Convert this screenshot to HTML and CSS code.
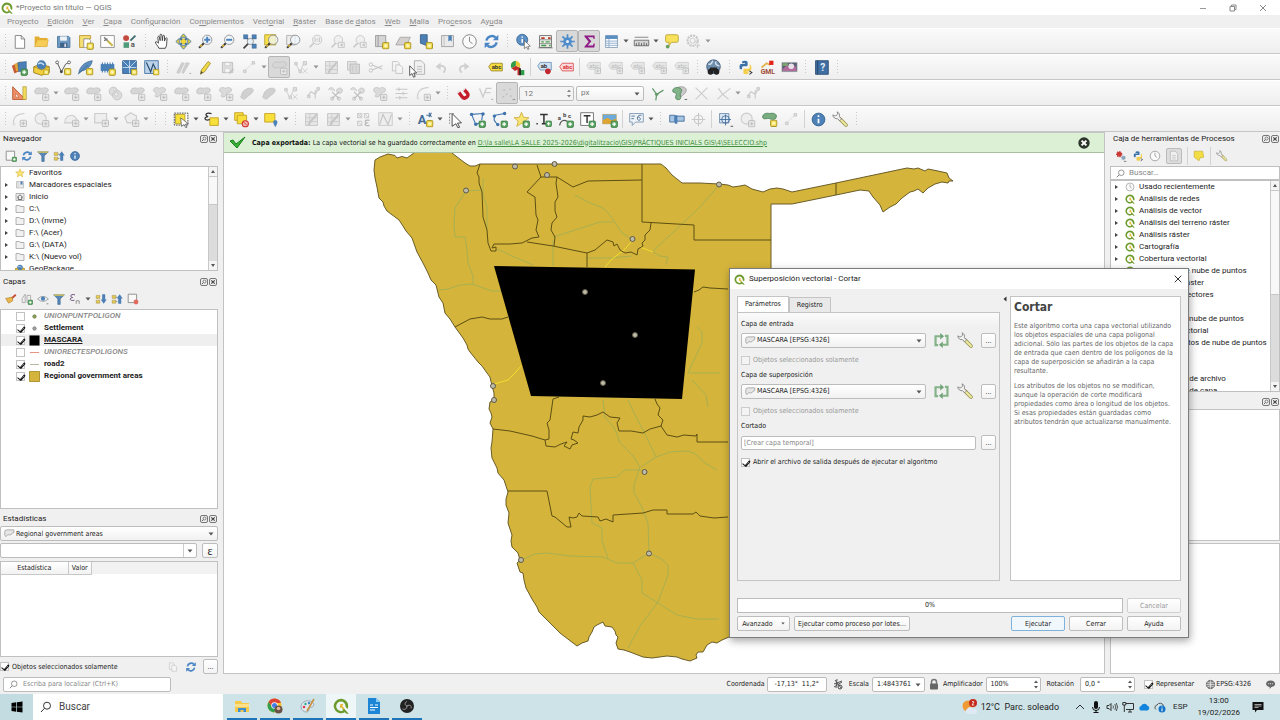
FILE: index.html
```html
<!DOCTYPE html>
<html lang="es">
<head>
<meta charset="utf-8">
<title>Proyecto sin título — QGIS</title>
<link rel="stylesheet" href="styles.css">
</head>
<body>
<svg class="defs" aria-hidden="true">
  <symbol id="by" viewBox="0 0 8 8"><rect x=".7" y=".7" width="6.6" height="6.6" rx="1" fill="#f2dc4e" stroke="#a58f22"/><path d="M4 2v4M2 4h4M2.6 2.6l2.8 2.8M5.4 2.6L2.600 5.400" stroke="#fffbd0" stroke-width=".8"/></symbol>
  <symbol id="bg" viewBox="0 0 8 8"><rect x=".7" y=".7" width="6.600" height="6.600" rx="1" fill="#5fa866" stroke="#3c7d45"/><path d="M4 2v4M2 4h4" stroke="#fff" stroke-width="1.300"/></symbol>
  <symbol id="bx" viewBox="0 0 8 8"><rect x=".7" y=".7" width="6.600" height="6.600" rx="1" fill="#e9e9e9" stroke="#b9b9b9"/><path d="M4 2.200v3.600M2.200 4h3.600" stroke="#bdbdbd"/></symbol>
  <symbol id="arr" viewBox="0 0 6 4"><path d="M.5.5h5L3 3.500z" fill="#555"/></symbol>
  <symbol id="q" viewBox="0 0 12 12"><path d="M6 .6a5.400 5.400 0 1 0 2.800 10l1.500 1.200h1.500L8.500 8.200 7 8l.5 1.300A3.500 3.500 0 1 1 9.400 6.600l1.500 1.600A5.400 5.400 0 0 0 6 .6z" fill="#6c9a2c"/><path d="M5.500 4.500h2.300L6.900 6l1.800 1.900-.9.900L6 7l-.9.800z" fill="#e2b733"/></symbol>
  <symbol id="mag" viewBox="0 0 12 12"><circle cx="7" cy="5" r="3.700" fill="none" stroke="#777"/><path d="M4.300 7.700L1 11" stroke="#777" stroke-width="1.200"/></symbol>

  <symbol id="new" viewBox="0 0 20 20"><path d="M5 3h7l4 4v11H5z" fill="#fff" stroke="#777"/><path d="M12 3v4h4" fill="none" stroke="#777"/></symbol>
  <symbol id="open" viewBox="0 0 20 20"><path d="M2 16V4h5l1 2h9v10z" fill="#e2ac30"/><path d="M2 16l3-8h13l-2 8z" fill="#f6cd55" stroke="#d7a42c" stroke-width=".6"/></symbol>
  <symbol id="save" viewBox="0 0 20 20"><path d="M4 4h12l1.500 1.500V17H3V4z" fill="#6f9bc4" stroke="#426d96"/><rect x="6" y="4" width="8" height="5" fill="#eef3f7"/><rect x="6" y="11.500" width="8.500" height="5.500" fill="#3e6288"/><rect x="11" y="12.500" width="2" height="4" fill="#dde"/></symbol>
  <symbol id="saveg" viewBox="0 0 20 20"><path d="M4 4h12v12H4z" fill="#dedede" stroke="#bbb"/><path d="M7 4h6v4H7zM7 11h6v5H7z" fill="#f4f4f4" stroke="#c4c4c4" stroke-width=".7"/><path d="M12 17l5-5" stroke="#c4c4c4" stroke-width="2"/></symbol>
  <symbol id="layout" viewBox="0 0 20 20"><path d="M3 3h13v4H8v10H3z" fill="#f5df72" stroke="#b9942f"/><path d="M8 7h6l2 2v8H8z" fill="#fff" stroke="#999"/><use href="#by" x="11" y="11" width="9" height="9"/></symbol>
  <symbol id="layoutm" viewBox="0 0 20 20"><path d="M2 3h16v14H2z" fill="#fff" stroke="#888"/><path d="M10 9l6 6" stroke="#c9b94e" stroke-width="2.500"/><path d="M6 5l4 4M6 9l4-2" stroke="#777" stroke-width="1.700"/></symbol>
  <symbol id="style" viewBox="0 0 20 20"><circle cx="6" cy="6" r="3.500" fill="#c4493f"/><path d="M11 9l6-6" stroke="#3d6c6e" stroke-width="2.200"/><rect x="3" y="11" width="6.500" height="6.500" fill="#4e9a79"/><text x="11.500" y="17" font-size="9" font-weight="700" fill="#555">a</text></symbol>
  <symbol id="hand" viewBox="0 0 20 20"><path d="M7 18c-1-3-5-6-4-7.500 1-1 3 1 3.500 1.500L5.600 5c0-1.500 1.800-1.500 2 0l.8 4L8.300 2.500c0-1.500 2-1.500 2.100 0L11 9l.6-5.500c.2-1.300 2-1 1.900.2L13.500 9.500l1.400-3.300c.5-1 1.900-.6 1.700.5C15.700 11 17 14 14.500 18z" fill="#fff" stroke="#333"/></symbol>
  <symbol id="pan" viewBox="0 0 20 20"><path d="M7 7h6v6H7z" fill="#f4db3a" stroke="#a8902a" stroke-width=".6"/><path d="M10 1l3.500 4h-7zM10 19l3.500-4h-7zM1 10l4-3.500v7zM19 10l-4-3.500v7z" fill="#f0d83d" stroke="#3f6f97" stroke-width="1"/><path d="M6 6l2 2M14 6l-2 2M6 14l2-2M14 14l-2-2" stroke="#3f6f97" stroke-width="2.400"/></symbol>
  <symbol id="lens" viewBox="0 0 20 20"><path d="M8 12l-5.500 5.500" stroke="#3a3a3a" stroke-width="2.400"/><path d="M6 14l-2 2" stroke="#e0b93e" stroke-width="1.800"/><circle cx="12" cy="8" r="5.500" fill="#eef5fb" fill-opacity=".75" stroke="#8b8b8b"/></symbol>
  <symbol id="zin" viewBox="0 0 20 20"><use href="#lens"/><path d="M12 4.500v7M8.500 8h7" stroke="#4a82bb" stroke-width="2.300"/></symbol>
  <symbol id="zout" viewBox="0 0 20 20"><use href="#lens"/><path d="M8.500 8h7" stroke="#4a82bb" stroke-width="2.300"/></symbol>
  <symbol id="zfull" viewBox="0 0 20 20"><path d="M3 2h5v5H3zM13 2h5v5h-5zM13 13h5v5h-5z" fill="#4d80b4" stroke="#35608c" stroke-width=".5"/><path d="M7 6l7 8M14 6l-4 4" stroke="#35608c" stroke-width="1.500"/><path d="M9 12l-6 6" stroke="#444" stroke-width="2"/><circle cx="11" cy="10" r="3.700" fill="#e8f1f8" stroke="#8b8b8b"/></symbol>
  <symbol id="zsel" viewBox="0 0 20 20"><path d="M2 2h13v12H2z" fill="#f5e04c" stroke="#b8a02c"/><use href="#lens"/></symbol>
  <symbol id="zlay" viewBox="0 0 20 20"><path d="M2 3h10v11H2z" fill="#eee" stroke="#aaa"/><use href="#lens"/></symbol>
  <symbol id="zg" viewBox="0 0 20 20"><path d="M8 12l-5 5" stroke="#ccc" stroke-width="2"/><circle cx="12" cy="8" r="5.500" fill="#f0f0f0" stroke="#c4c4c4"/><path d="M9.500 5.500v5M12 6.500V8M12 9v1M14.500 5.500v5" stroke="#bbb"/></symbol>
  <symbol id="zg2" viewBox="0 0 20 20"><path d="M8 12l-5 5" stroke="#ccc" stroke-width="2"/><circle cx="11" cy="8" r="5" fill="#f0f0f0" stroke="#c4c4c4"/><path d="M11 11h7v6h-7z" fill="#eee" stroke="#c4c4c4"/><path d="M16 12l-3 2 3 2z" fill="#bbb"/></symbol>
  <symbol id="mapn" viewBox="0 0 20 20"><path d="M3 3h12v13H3z" fill="#d5d5d5" stroke="#969696"/><path d="M6 3v13" stroke="#969696"/><use href="#by" x="10.500" y="10.500" width="9" height="9"/></symbol>
  <symbol id="map3" viewBox="0 0 20 20"><path d="M6 5h12l-4 9H1z" fill="#d5d0d0" stroke="#a5a0a0"/><use href="#by" x="10.500" y="10.500" width="9" height="9"/></symbol>
  <symbol id="bmn" viewBox="0 0 20 20"><path d="M4 2h8v13l-4-1.500L4 12z" fill="#4c7fb4" stroke="#365f88"/><use href="#by" x="10" y="10.500" width="9" height="9"/></symbol>
  <symbol id="bm" viewBox="0 0 20 20"><path d="M3 3h14v13H3z" fill="#eaeaea" stroke="#999"/><path d="M6 3v13" stroke="#bbb"/><path d="M11 3h4v7l-2-1.500L11 10z" fill="#4c7fb4"/></symbol>
  <symbol id="clock" viewBox="0 0 20 20"><circle cx="10" cy="10" r="8" fill="#fafafa" stroke="#777"/><path d="M10 4.500V10l3.500 2.500" fill="none" stroke="#777"/></symbol>
  <symbol id="ref" viewBox="0 0 20 20"><path d="M4 9a6.500 6.500 0 0 1 11-3.500M16 11a6.500 6.500 0 0 1-11 3.500" fill="none" stroke="#4a86c5" stroke-width="2.800"/><path d="M18 2v6.500h-6.500zM2 18v-6.500h6.500z" fill="#4a86c5"/></symbol>
  <symbol id="refg" viewBox="0 0 20 20"><path d="M6 15.500H3V5h6M14 4.500h3V15h-6" fill="none" stroke="#84b389" stroke-width="2.600"/><path d="M8.500 1.200v7.600L13 5zM11.500 11.200v7.600L7 15z" fill="#6fa377"/></symbol>
  <symbol id="ident" viewBox="0 0 20 20"><circle cx="8.500" cy="8" r="6.500" fill="#5c8fc4" stroke="#39689a"/><path d="M8.500 7v4.500M8.500 4v1.500" stroke="#fff" stroke-width="1.800"/><path d="M11 9l7 6.500-3 .2 1.500 3-1.500.6-1.300-3-2.700 2z" fill="#fff" stroke="#555" stroke-width=".8"/></symbol>
  <symbol id="abac" viewBox="0 0 20 20"><path d="M3 3h14v14H3z" fill="#f3f3ee" stroke="#666"/><path d="M3 8h14M3 12.500h14M1.500 17.500h17" stroke="#666" stroke-width=".8"/><path d="M5 6h4M13 6h3" stroke="#c0392b" stroke-width="2"/><path d="M5 10.500h3M10 10.500h5" stroke="#3f9a4f" stroke-width="1.600"/><path d="M5 14.700h6M14 14.700h2" stroke="#3f9a4f" stroke-width="1.600"/></symbol>
  <symbol id="gear" viewBox="0 0 20 20"><path d="M10 1.500v17M1.500 10h17M4 4l12 12M16 4L4 16" stroke="#4f8ccb" stroke-width="2"/><circle cx="10" cy="10" r="5" fill="#4f8ccb"/><circle cx="10" cy="10" r="1.800" fill="#e9f0f8"/></symbol>
  <symbol id="sigma" viewBox="0 0 20 20"><path d="M4 3h12v4h-1.200l-.7-1.900H8L12.200 9.800 8 14.800h6l1-2.500h1.300l-.6 4.700H4v-.9l5-5.800L4 4z" fill="#8e1b86"/></symbol>
  <symbol id="table" viewBox="0 0 20 20"><path d="M3 3h14v14H3z" fill="#fff" stroke="#7f9ab4"/><path d="M3 3h14v4H3z" fill="#5b8fc4"/><path d="M3 9.500h14M3 12h14M3 14.500h14M7 7v10" stroke="#86a9ca"/></symbol>
  <symbol id="ruler" viewBox="0 0 20 20"><path d="M2 5h16" stroke="#777"/><path d="M1.500 8.500h17V15h-17z" fill="#d6d6d6" stroke="#666"/><path d="M4 12v3M7 11v4M10 12v3M13 11v4M16 12v3" stroke="#555"/></symbol>
  <symbol id="tip" viewBox="0 0 20 20"><path d="M5 2h11q2 0 2 2v5q0 2-2 2h-6l-3 4v-4H5q-2 0-2-2V4q0-2 2-2z" fill="#f7e15a" stroke="#b9a136"/><circle cx="5.500" cy="16" r="2.200" fill="#67a15c"/></symbol>
  <symbol id="gearg" viewBox="0 0 20 20"><circle cx="9" cy="9" r="6" fill="none" stroke="#c8c8c8" stroke-width="2.500" stroke-dasharray="2.500 1"/><circle cx="9" cy="9" r="3" fill="none" stroke="#c8c8c8"/><path d="M11 9l6 6-3 0 1 3" fill="#eee" stroke="#c0c0c0"/></symbol>

  <symbol id="dsm" viewBox="0 0 20 20"><path d="M1 8l6-3 3 9-6 3z" fill="#c85a34"/><path d="M4 6l8-3v11H6z" fill="#e0a83b"/><path d="M8 4l10-1v10l-9 2z" fill="#4b7fb5" stroke="#305a85" stroke-width=".6"/><use href="#bg" x="11" y="11" width="9" height="9"/></symbol>
  <symbol id="gpkg" viewBox="0 0 20 20"><path d="M1 9l9-3 9 3v7l-9 3-9-3z" fill="#e7c132" stroke="#8f7620"/><circle cx="10" cy="7" r="5.500" fill="#4a7fb6"/><path d="M6 6q3-3 7 1" stroke="#cfe0ef" fill="none" stroke-width="1.500"/><path d="M1 9l9 4 9-4v7l-9 3-9-3z" fill="#f2cf3e" stroke="#9a8024" stroke-width=".7"/><use href="#by" x="12" y="12" width="7" height="7"/></symbol>
  <symbol id="vn" viewBox="0 0 20 20"><path d="M2.500 4l5 11 5-9 4-2" fill="none" stroke="#444"/><circle cx="2.500" cy="4" r="1.700" fill="#fff" stroke="#555"/><circle cx="7.500" cy="15" r="1.700" fill="#444"/><circle cx="16.500" cy="4" r="1.700" fill="#fff" stroke="#555"/><use href="#by" x="10.500" y="10.500" width="9" height="9"/></symbol>
  <symbol id="feather" viewBox="0 0 20 20"><path d="M2 17C3 9 9 3 18 2c-1 6-5 10-12 12z" fill="#5b8dbf" stroke="#355f8a" stroke-width=".7"/><path d="M1 18L13 7" stroke="#355f8a" stroke-width=".7"/><use href="#by" x="10.500" y="10.500" width="9" height="9"/></symbol>
  <symbol id="chip" viewBox="0 0 20 20"><path d="M2 6h16v8H2z" fill="#4a80b8"/><path d="M4 4v12M7 4v12M10 4v12M13 4v12M16 4v12" stroke="#4a80b8" stroke-width="1.300"/><use href="#by" x="11" y="11" width="9" height="9"/></symbol>
  <symbol id="grid" viewBox="0 0 20 20"><path d="M2 2h16v15H2z" fill="#4a80b8" stroke="#2d5a8b"/><path d="M2 10h16M10 2v15M2 2l8 8M18 2l-8 8" stroke="#dfeaf5" stroke-width=".9"/><use href="#by" x="11.500" y="11.500" width="8" height="8"/></symbol>
  <symbol id="virt" viewBox="0 0 20 20"><path d="M2 2h16v15H2z" fill="#bcd3ea" stroke="#3f6e9f"/><path d="M4 4l5 11 3-9 4 8" fill="none" stroke="#2d4f74" stroke-width="1.400"/><use href="#by" x="11.500" y="11.500" width="8" height="8"/></symbol>
  <symbol id="pens" viewBox="0 0 20 20"><path d="M2 16L8 4l3 1-6 12zM8 16l5-12 4 1-7 12z" fill="#cfcfcf" stroke="#bbb" stroke-width=".5"/><path d="M17 17h2" stroke="#999"/></symbol>
  <symbol id="pen" viewBox="0 0 20 20"><path d="M4 18l1-5 8-10 3 2-7 10z" fill="#f0d843" stroke="#8d7d2a" stroke-width=".8"/><path d="M4 18l1-4 2 2z" fill="#444"/></symbol>
  <symbol id="digi" viewBox="0 0 20 20"><path d="M3 15l12-11" stroke="#ccc" stroke-dasharray="2 1"/><path d="M13 3h3v3h-3zM3 13h3v3H3z" fill="#ddd" stroke="#c6c6c6"/></symbol>
  <symbol id="blob" viewBox="0 0 20 20"><path d="M2 8c0-5 5-5 8-4 3-1 8-1 8 2s-4 4-7 4-9 2-9-2z" fill="#d6d6d6" stroke="#c0c0c0"/><use href="#bx" x="10.500" y="10" width="9" height="9"/></symbol>
  <symbol id="blob2" viewBox="0 0 20 20"><path d="M3 6c0-3 4-4 7-2 3-2 8-1 7 3-1 2-4 1-5 3s-3 5-6 4 1-3 0-4-3-2-3-4z" fill="#dadada" stroke="#c3c3c3"/><use href="#bx" x="10.500" y="10" width="9" height="9"/></symbol>
  <symbol id="rings" viewBox="0 0 20 20"><circle cx="7.500" cy="7.500" r="5" fill="#dcdcdc" stroke="#c3c3c3"/><circle cx="12" cy="12" r="5.500" fill="#dcdcdc" stroke="#c3c3c3"/><circle cx="11" cy="11" r="2" fill="#f2f2f2" stroke="#c6c6c6"/></symbol>
  <symbol id="patch" viewBox="0 0 20 20"><path d="M3 12c1-6 7-9 12-8 4 2 0 6-3 8s-5 6-8 4-2-2-1-4z" fill="#d0d0d0" stroke="#c2c2c2"/></symbol>
  <symbol id="nodes" viewBox="0 0 20 20"><path d="M3 5l5 10 5-10" fill="none" stroke="#c8c8c8"/><path d="M2 4h3v3H2zM12 3h4v4h-4zM7 13h3v3H7z" fill="#ddd" stroke="#c6c6c6"/><path d="M11 11l6 6M17 11l-6 6" stroke="#ccc"/></symbol>
  <symbol id="split" viewBox="0 0 20 20"><path d="M2 6c0-4 6-4 7 1M11 7c1-5 8-4 7 0s-5 3-7 1" fill="#dcdcdc" stroke="#c4c4c4"/><path d="M6 8l8 8M14 8l-8 8" stroke="#bbb" stroke-width="1.300"/><circle cx="6" cy="16" r="1.800" fill="none" stroke="#bbb"/><circle cx="14" cy="16" r="1.800" fill="none" stroke="#bbb"/></symbol>
  <symbol id="lines" viewBox="0 0 20 20"><path d="M3 5h14M3 10h14M3 15h14M7 3v4M12 8v4M8 13v4" stroke="#c8c8c8" stroke-width="1.300"/></symbol>
  <symbol id="tableg" viewBox="0 0 20 20"><path d="M3 3h14v14H3z" fill="#e6e6e6" stroke="#c2c2c2"/><path d="M3 8h14M8 3v14M3 12.500h14" stroke="#cacaca"/><path d="M6 16L16 4" stroke="#c4c4c4" stroke-width="2"/></symbol>
  <symbol id="trash" viewBox="0 0 20 20"><path d="M3 3h10v10H3z" fill="#e3e3e3" stroke="#c0c0c0"/><path d="M6 6h11v11H6z" fill="#dadada" stroke="#b8b8b8"/><path d="M9 8v7M13 8v7" stroke="#c4c4c4"/></symbol>
  <symbol id="cut" viewBox="0 0 20 20"><path d="M6 7l12 5M6 13l12-5" stroke="#c6c6c6" stroke-width="1.300"/><circle cx="4.500" cy="6.500" r="2" fill="none" stroke="#c0c0c0"/><circle cx="4.500" cy="13.500" r="2" fill="none" stroke="#c0c0c0"/></symbol>
  <symbol id="copy" viewBox="0 0 20 20"><path d="M4 3h6l2 2v9H4z" fill="#f4f4f4" stroke="#c0c0c0"/><path d="M8 7h5l3 3v7H8z" fill="#f4f4f4" stroke="#c0c0c0"/></symbol>
  <symbol id="undo" viewBox="0 0 20 20"><path d="M5 9c8-3 12 2 7 7" fill="none" stroke="#d0d0d0" stroke-width="2.200"/><path d="M3 9l6-5v9z" fill="#d0d0d0"/></symbol>
  <symbol id="abc" viewBox="0 0 20 20"><path d="M2 9l3-4h13v9H5z" fill="#f5dc3f" stroke="#9a8729"/><text x="5.500" y="12" font-size="7" font-weight="700" fill="#333">abc</text></symbol>
  <symbol id="diag" viewBox="0 0 20 20"><path d="M8 8V2a6 6 0 0 1 5 8z" fill="#e8c832"/><path d="M8 8V2a6 6 0 0 0-5 9z" fill="#2f9c46"/><path d="M8 8l5 3-6 3-4-3z" fill="#c22f28"/><path d="M10 10h3v9h-3z" fill="#c22f28"/><path d="M13 13h5v6h-5z" fill="#2f9c46"/><path d="M12 11h2v8h-2z" fill="#222"/></symbol>
  <symbol id="abcp" viewBox="0 0 20 20"><path d="M2 8l3-4h13v9H5z" fill="#cfe0f1" stroke="#6d92b7"/><text x="5.500" y="11" font-size="7" font-weight="700" fill="#333">ab</text><circle cx="14" cy="14.500" r="3.300" fill="#c1272d"/></symbol>
  <symbol id="abcr" viewBox="0 0 20 20"><path d="M2 9l3-4h13v9H5z" fill="#fbdcdc" stroke="#dc4a4a"/><text x="5.500" y="12" font-size="7" font-weight="700" fill="#d33">abc</text></symbol>
  <symbol id="abcg" viewBox="0 0 20 20"><path d="M2 8l3-4h13v8H5z" fill="#e7e7e7" stroke="#cecece"/><text x="5" y="10.500" font-size="7" fill="#bbb">abc</text><use href="#bx" x="11" y="10" width="8" height="8"/></symbol>
  <symbol id="osm" viewBox="0 0 20 20"><circle cx="10" cy="9" r="8" fill="#6e8fae" stroke="#3e5a76"/><path d="M4 6q4 1 5-4M13 3q-2 4 4 5" stroke="#dfe9f2" fill="none" stroke-width="1.500"/><circle cx="6.500" cy="15" r="3.400" fill="#222"/><circle cx="13.500" cy="15" r="3.400" fill="#222"/><path d="M6 10h8l1 4H5z" fill="#222"/></symbol>
  <symbol id="py" viewBox="0 0 20 20"><path d="M3 11V8q0-2 2-2h4.500V5H6V3.500Q6 2 9 2t3.500 1.500V7q0 1.500-1.500 1.500H7.500Q6 8.500 6 10v2H4.500Q3 12 3 11z" fill="#3b73a8"/><path d="M15 6v4q0 1.500-1.500 1.500H9q-1.500 0-1.500 1.500v3Q7.500 18 10 18t3.500-1.500v-2h-3V14h4q2.500 0 2.500-3.500T15 6z" fill="#f3cf48"/><path d="M14.500 14l3 2-3 2" fill="none" stroke="#333" stroke-width="1.200"/></symbol>
  <symbol id="gml" viewBox="0 0 20 20"><path d="M3 10l6-5 4 2" stroke="#e3b34c" fill="none" stroke-width="2"/><path d="M12 2h5v5h-5z" fill="#e2231a"/><text x="2" y="18" font-size="8" font-weight="700" fill="#a04a35">GML</text></symbol>
  <symbol id="photo" viewBox="0 0 20 20"><path d="M1 4h18v11H1z" fill="#566174" stroke="#bbb" stroke-width=".6"/><path d="M2 12l5-5 4 4 3-5 4 4v4H2z" fill="#b26b9c"/><circle cx="12" cy="8.500" r="3.300" fill="#e9e2ea"/><path d="M2 5h6v3H2z" fill="#7faa6c"/></symbol>
  <symbol id="help" viewBox="0 0 20 20"><path d="M3 2h15v16H3z" fill="#3f6fa3" stroke="#2a4a70"/><path d="M5.500 2v16" stroke="#26415f"/><text x="8.500" y="14" font-size="12" font-weight="700" fill="#e6eef7">?</text></symbol>

  <symbol id="tri" viewBox="0 0 20 20"><path d="M2 2v15h15z" fill="#ef8f68" stroke="#b3512d"/><path d="M5.500 10v4h4z" fill="#fff" stroke="#b3512d" stroke-width=".6"/><path d="M14 2h4v15h-4z" fill="#f3dc5a" stroke="#a38c2c" stroke-width=".7"/></symbol>
  <symbol id="magnet" viewBox="0 0 20 20"><path d="M4 8l4.500 6c3 3.500 9-1 6-4.500L10.500 5" fill="none" stroke="#c41e2b" stroke-width="4"/><path d="M2.500 9.500l3-2.800M9 6.500l3-2.800" stroke="#e8e8e8" stroke-width="2.200"/></symbol>
  <symbol id="vsnap" viewBox="0 0 20 20"><path d="M3 4l4 10 4-10h6M10 9h6" fill="none" stroke="#ccc" stroke-width="1.600"/><path d="M17 17h2" stroke="#999"/></symbol>
  <symbol id="dots" viewBox="0 0 20 20"><path d="M5 5h2v2H5zM12 4h2v2h-2zM8 10h2v2H8zM13 12h2v2h-2zM4 13h2v2H4z" fill="#c2c2c2"/><path d="M16 17h3" stroke="#888"/></symbol>
  <symbol id="topo" viewBox="0 0 20 20"><path d="M4 4l5 7M17 6L9 11l-1 7" fill="none" stroke="#669c70" stroke-width="1.500"/><circle cx="9" cy="11" r="2" fill="#669c70"/></symbol>
  <symbol id="green" viewBox="0 0 20 20"><path d="M8 3c3-2 10-1 10 3s-4 5-6 8z" fill="#c9c9c9" stroke="#9d9d9d"/><path d="M2 7c0-4 6-5 9-3s1 4 0 6 2 6-1 7-6-1-4-5-4-2-4-5z" fill="#83b389" stroke="#4d8257"/><path d="M16 17h3" stroke="#555"/></symbol>
  <symbol id="cross" viewBox="0 0 20 20"><path d="M3 3l14 14M17 3L3 17" stroke="#ccc" stroke-width="1.300"/></symbol>
  <symbol id="crv" viewBox="0 0 20 20"><path d="M4 4l5 7 9-7M3 17l6-6 7 6" fill="none" stroke="#ccc" stroke-width="1.300"/></symbol>
  <symbol id="trace" viewBox="0 0 20 20"><path d="M3 13l4-5 5 3 4-7M12 16V6" fill="none" stroke="#ccc" stroke-width="1.500"/><path d="M14 3h3v3h-3zM3 12h3v3H3z" fill="#ddd" stroke="#c6c6c6"/></symbol>

  <symbol id="curve" viewBox="0 0 20 20"><path d="M3 16C2 7 8 3 16 3" fill="none" stroke="#ccc" stroke-width="1.300"/><path d="M2 14h3v3H2z" fill="#ddd"/><use href="#bx" x="10" y="10" width="9" height="9"/></symbol>
  <symbol id="circ" viewBox="0 0 20 20"><circle cx="9" cy="9" r="6.500" fill="#eee" stroke="#ccc" stroke-width="1.300"/><use href="#bx" x="10.500" y="10.500" width="9" height="9"/></symbol>
  <symbol id="ell" viewBox="0 0 20 20"><path d="M2 14c0-7 5-9 8-9s7 4 7 9z" fill="#eee" stroke="#ccc" stroke-width="1.300"/><use href="#bx" x="10.500" y="10" width="9" height="9"/></symbol>
  <symbol id="rct" viewBox="0 0 20 20"><path d="M2 3h14v11H2z" fill="#eee" stroke="#ccc" stroke-width="1.300"/><use href="#bx" x="10" y="10" width="9" height="9"/></symbol>
  <symbol id="poly" viewBox="0 0 20 20"><path d="M9 2l7 4-1 8H5L2 7z" fill="#eee" stroke="#ccc" stroke-width="1.300"/><use href="#bx" x="10.500" y="10" width="9" height="9"/></symbol>
  <symbol id="sel" viewBox="0 0 20 20"><path d="M1.500 2.500h16v14h-16z" fill="#fff" stroke="#333" stroke-dasharray="2 1"/><path d="M3 4h11v11H3z" fill="#f7e03c" stroke="#b39b25"/><path d="M9 8l9 7-3.500.5 2 3.500-1.500.6-2-3.600L10 18z" fill="#fff" stroke="#444" stroke-width=".8"/></symbol>
  <symbol id="sele" viewBox="0 0 20 20"><path d="M8 8h10v9H8z" fill="#f7df3c" stroke="#c29c22"/><path d="M10 3C4 1 1 5 6 6.500 0 7.500 2 12 8 10" fill="none" stroke="#333" stroke-width="1.500"/></symbol>
  <symbol id="selc" viewBox="0 0 20 20"><path d="M2 2h10v9H2z" fill="#f7df3c" stroke="#c29c22"/><path d="M5 5h11v10H5z" fill="#f7df3c" stroke="#c29c22"/><circle cx="14.500" cy="15" r="3.600" fill="#f3b6b1" stroke="#d0332b" stroke-width="1.300"/><path d="M12.500 13l4 4" stroke="#d0332b"/></symbol>
  <symbol id="sell" viewBox="0 0 20 20"><path d="M2 3h12v10H2z" fill="#f7df3c" stroke="#c29c22"/><path d="M14.500 19c-4-6-2.500-8 0-8s4 2 0 8z" fill="#4e83ba"/></symbol>
  <symbol id="eps" viewBox="0 0 20 20"><path d="M3 3h5v5H3zM3 12h5v5H3zM11 3h5v5h-5zM3 3l5 5M8 3L3 8M11 3l5 5M3 12l5 5" fill="none" stroke="#c4c4c4"/><path d="M17 11c-6-1-6 2-3 3-4 1-2 4 3 3" fill="none" stroke="#b5b5b5" stroke-width="1.400"/></symbol>
  <symbol id="mpoly" viewBox="0 0 20 20"><path d="M2 2h16v15H2z" fill="#eee" stroke="#c8c8c8"/><path d="M3 16L7 4l6 12 4-12" fill="none" stroke="#c2c2c2" stroke-width="1.300"/></symbol>
  <symbol id="anno" viewBox="0 0 20 20"><text x="1" y="15" font-size="15" font-weight="700" fill="#426b96">A</text><path d="M11 5h4M14 2l3 5M14 7l3-5" stroke="#426b96" stroke-width="1.300"/><use href="#by" x="10.500" y="10.500" width="9" height="9"/></symbol>
  <symbol id="asel" viewBox="0 0 20 20"><path d="M3 3v12M3 3h5" stroke="#777" stroke-dasharray="2 1.500"/><path d="M6 3l11 11-4.700.3 2.600 4.700-2 .8-2.500-4.800L6 18z" fill="#fff" stroke="#333"/></symbol>
  <symbol id="apoly" viewBox="0 0 20 20"><path d="M3 4l13-1-1 8M3 4l5 12 4-2" fill="none" stroke="#3d72ad" stroke-width="1.300"/><circle cx="3" cy="4" r="2" fill="#3d72ad"/><circle cx="16.500" cy="3.500" r="2" fill="#3d72ad"/><circle cx="8" cy="15.500" r="2" fill="#3d72ad"/><use href="#bg" x="11" y="11" width="9" height="9"/></symbol>
  <symbol id="aline" viewBox="0 0 20 20"><path d="M16 3L5 5q-4 5 3 11" fill="none" stroke="#3d72ad" stroke-width="1.300"/><circle cx="16" cy="3" r="2" fill="#3d72ad"/><circle cx="4" cy="6" r="2" fill="#3d72ad"/><circle cx="8" cy="16" r="2" fill="#3d72ad"/><use href="#bg" x="11" y="11" width="9" height="9"/></symbol>
  <symbol id="star" viewBox="0 0 20 20"><path d="M10 1.500l2.500 6 6.300.4-4.900 4 1.600 6.100-5.500-3.400L4.500 18l1.600-6.100-4.900-4 6.300-.4z" fill="#f8e470" stroke="#c9a52f" stroke-width=".9"/></symbol>
  <symbol id="astar" viewBox="0 0 20 20"><use href="#star"/><use href="#bg" x="11" y="11" width="9" height="9"/></symbol>
  <symbol id="atext" viewBox="0 0 20 20"><path d="M6 4h9M10.500 4v11M8 15h5" stroke="#333" stroke-width="1.800"/><path d="M1.500 14h2v2h-2z" fill="#555"/><use href="#bg" x="12" y="11" width="8" height="8"/></symbol>
  <symbol id="acurve" viewBox="0 0 20 20"><text x="1" y="10" font-size="7" font-weight="700" fill="#444">a</text><text x="7" y="7" font-size="7" font-weight="700" fill="#444">b</text><text x="13" y="8" font-size="7" font-weight="700" fill="#444">c</text><path d="M3 17c1-6 5-7 9-5" fill="none" stroke="#555" stroke-width="1.500"/><use href="#bg" x="11" y="11" width="9" height="9"/></symbol>
  <symbol id="atbox" viewBox="0 0 20 20"><path d="M2 2h15v15H2z" fill="#fff" stroke="#666"/><path d="M5.500 5.500h8M9.500 5.500V14" stroke="#333" stroke-width="1.700"/><use href="#bg" x="11" y="11" width="9" height="9"/></symbol>
  <symbol id="apic" viewBox="0 0 20 20"><path d="M2 4h16v11H2z" fill="#6cabdc" stroke="#b98b2b" stroke-width=".6"/><path d="M2 11l6-3 4 3 6-2v6H2z" fill="#e0a531"/><use href="#bg" x="11" y="11" width="9" height="9"/></symbol>
  <symbol id="aform" viewBox="0 0 20 20"><path d="M2 3h16v10H9l-4 4v-4H2z" fill="#eef3f8" stroke="#7591ad"/><path d="M4 6h4M4 9h3M16 5c-6-1-6 6-3 6s1-6-2-3" stroke="#47698c" fill="none"/></symbol>
  <symbol id="mlab" viewBox="0 0 20 20"><path d="M2 5h6v8H2zM10 6h9v6h-9z" fill="#a8c6e3" stroke="#3d6998"/><path d="M8 5h3v10H8z" fill="#4a7fb6"/></symbol>
  <symbol id="targ" viewBox="0 0 20 20"><circle cx="10" cy="10" r="5" fill="none" stroke="#c9c9c9" stroke-width="1.300"/><path d="M10 2v16M2 10h16" stroke="#c9c9c9" stroke-width="1.300"/></symbol>
  <symbol id="targb" viewBox="0 0 20 20"><path d="M3 3h11v11H3z" fill="#dbe6f2" stroke="#6a89a8"/><circle cx="10" cy="10" r="4.500" fill="none" stroke="#3f6b99"/><path d="M10 4v13M3.500 10h13" stroke="#3f6b99"/><path d="M16 18h3" stroke="#444"/></symbol>
  <symbol id="blobg" viewBox="0 0 20 20"><path d="M2 7c0-4 5-5 8-4 4-1 9 0 8 4s-5 3-8 2-8 2-8-2z" fill="#79ad7f" stroke="#4e8458"/><use href="#by" x="10.500" y="10" width="9" height="9"/></symbol>
  <symbol id="info" viewBox="0 0 20 20"><circle cx="10" cy="10" r="7.500" fill="#4d81b8" stroke="#325e8c"/><path d="M10 9v5.500M10 5v2" stroke="#fff" stroke-width="2"/></symbol>
  <symbol id="wrench" viewBox="0 0 20 20"><path d="M9.500 9.500l7 7" stroke="#9a9252" stroke-width="4.400" stroke-linecap="round"/><path d="M10.500 10.500l6 6" stroke="#eae79e" stroke-width="2.600" stroke-linecap="round"/><path d="M6 1c1 2 .5 3-.5 4S2.500 6 1 4.500C1 8 4 9.500 6.500 9l2.500 2.500 2.200-2.200L8.700 6.800C9.200 4 8.500 2 6 1z" fill="#f3f3f3" stroke="#707070" stroke-width=".9"/></symbol>
  <symbol id="filt" viewBox="0 0 20 20"><path d="M1 3h18l-7 7v9H8v-9z" fill="#5687b8" stroke="#3c688f"/><path d="M1 2.500h18l-1.500 2h-15z" fill="#e2c94d"/></symbol>
  <symbol id="coll" viewBox="0 0 20 20"><path d="M2 4h6v5H2zM2 12h6v5H2z" fill="#e7ca52" stroke="#9a8b4c" stroke-width=".8"/><path d="M8 7h3M8 14h3" stroke="#666"/><path d="M12 18V9H9.500L14.500 2l5 7H17v9z" fill="#4b7fb5"/></symbol>
  <symbol id="expd" viewBox="0 0 20 20"><path d="M2 4h6v5H2zM2 12h6v5H2z" fill="#e7ca52" stroke="#9a8b4c" stroke-width=".8"/><path d="M12 2v9H9.500l5 7 5-7H17V2z" fill="#4b7fb5"/></symbol>
  <symbol id="addl" viewBox="0 0 20 20"><path d="M2 2h14v15H2z" fill="#f8f8f8" stroke="#8a8a8a" stroke-width="1.500"/><use href="#bg" x="11" y="11" width="9" height="9"/></symbol>
  <symbol id="reml" viewBox="0 0 20 20"><path d="M2 2h14v14H2z" fill="#f8f8f8" stroke="#8a8a8a" stroke-width="1.500"/><circle cx="15" cy="15" r="4" fill="#e36a5f"/></symbol>
  <symbol id="brush" viewBox="0 0 20 20"><path d="M10 10l8-7" stroke="#c74b33" stroke-width="3"/><path d="M1 9l5 8 7-4-1-6z" fill="#e9b74d" stroke="#ac7a28"/></symbol>
  <symbol id="eye" viewBox="0 0 20 20"><path d="M1 10q9-9 18 0-9 8-18 0z" fill="#eef3f7" stroke="#777"/><circle cx="10" cy="9.500" r="3.500" fill="#4c81b7"/><path d="M16 18h3" stroke="#444"/></symbol>
  <symbol id="grp" viewBox="0 0 20 20"><path d="M2 16V9l5-7v14zM10 4h6v12h-6z" fill="#eee" stroke="#888"/><use href="#bg" x="11" y="11" width="9" height="9"/></symbol>
  <symbol id="epsu" viewBox="0 0 20 20"><path d="M10 3C3 1 0 6 6 7.500-1 9 2 14 9 12" fill="none" stroke="#654a77" stroke-width="1.600"/><path d="M12 18v-5h5v5" fill="none" stroke="#888" stroke-width="1.500"/></symbol>
  <symbol id="fold" viewBox="0 0 20 20"><path d="M2 3h7l1 2h8v12H2z" fill="#f1f1f1" stroke="#858585" stroke-width="1.200"/></symbol>
  <symbol id="home" viewBox="0 0 20 20"><path d="M2 3h16v14H2z" fill="#f1f1f1" stroke="#858585" stroke-width="1.200"/><path d="M10 5.500l5 4.500h-1.500v5h-7v-5H5z" fill="none" stroke="#444" stroke-width="1.500"/></symbol>
  <symbol id="pol" viewBox="0 0 14 10"><path d="M1 7.500V3q0-2 3-2h8.500v3.500q-3 .5-4 3H7Q5 6 3.500 8.500T1 7.500z" fill="#e6e6e6" stroke="#8a8a8a" stroke-width=".8"/></symbol>
  <symbol id="gears" viewBox="0 0 20 20"><circle cx="7" cy="7" r="4" fill="#c93b36" stroke="#c93b36" stroke-width="2.600" stroke-dasharray="2 1.400"/><circle cx="14" cy="13" r="3" fill="#8aa3bb" stroke="#8aa3bb" stroke-width="2" stroke-dasharray="1.600 1.200"/><path d="M15 19h4" stroke="#333"/></symbol>
  <symbol id="doc" viewBox="0 0 20 20"><path d="M4 2h8l4 4v12H4z" fill="#f0f0f0" stroke="#aaa"/><path d="M7 9h6M7 12h6M7 15h6" stroke="#b5b5b5"/></symbol>
  <symbol id="note" viewBox="0 0 20 20"><path d="M2 2h14l2 10-6 1-2 5-8-6z" fill="#f2dd45" stroke="#c4a92c"/></symbol>
  <symbol id="float" viewBox="0 0 8 8"><rect x=".5" y=".5" width="7" height="7" rx="1.500" fill="#eee" stroke="#777"/><circle cx="4.500" cy="3.500" r="1.500" fill="none" stroke="#666" stroke-width=".8"/><path d="M2 6l1.500-1.500" stroke="#666"/></symbol>
  <symbol id="close" viewBox="0 0 8 8"><rect x=".5" y=".5" width="7" height="7" rx="1.500" fill="#eee" stroke="#777"/><path d="M2.300 2.300l3.400 3.400M5.700 2.300L2.300 5.700" stroke="#444" stroke-width="1.100"/></symbol>
</svg>

<header class="titlebar">
  <svg class="app-logo"><use href="#q"/></svg>
  <span>*Proyecto sin título — QGIS</span>
  <div class="win-btns">
    <button aria-label="Minimizar"><svg viewBox="0 0 8 8"><path d="M1 4.500h6" stroke="#999"/></svg></button>
    <button aria-label="Restaurar"><svg viewBox="0 0 8 8"><path d="M1 2.500h4.500V7H1zM2.500 2.500V1H7v4.500H5.500" fill="none" stroke="#888"/></svg></button>
    <button aria-label="Cerrar"><svg viewBox="0 0 8 8"><path d="M1 1l6 6M7 1L1 7" stroke="#888"/></svg></button>
  </div>
</header>

<nav class="menubar">
  <a href="#">Pro<u>y</u>ecto</a><a href="#"><u>E</u>dición</a><a href="#"><u>V</u>er</a><a href="#"><u>C</u>apa</a><a href="#">Confi<u>g</u>uración</a><a href="#">Co<u>m</u>plementos</a><a href="#">Vect<u>o</u>rial</a><a href="#"><u>R</u>áster</a><a href="#">Base de <u>d</u>atos</a><a href="#"><u>W</u>eb</a><a href="#"><u>M</u>alla</a><a href="#">Pro<u>c</u>esos</a><a href="#">Ay<u>u</u>da</a>
</nav>

<div class="toolbar"><i class="grip first"></i>
  <button class="tb"><svg><use href="#new"/></svg></button><button class="tb"><svg><use href="#open"/></svg></button><button class="tb"><svg><use href="#save"/></svg></button><button class="tb"><svg><use href="#layout"/></svg></button><button class="tb"><svg><use href="#layoutm"/></svg></button><button class="tb"><svg><use href="#style"/></svg></button><i class="grip"></i>
  <button class="tb"><svg><use href="#hand"/></svg></button><button class="tb"><svg><use href="#pan"/></svg></button><button class="tb"><svg><use href="#zin"/></svg></button><button class="tb"><svg><use href="#zout"/></svg></button><button class="tb"><svg><use href="#zfull"/></svg></button><button class="tb"><svg><use href="#zsel"/></svg></button><button class="tb"><svg><use href="#zlay"/></svg></button><button class="tb"><svg><use href="#zg"/></svg></button><button class="tb"><svg><use href="#zg2"/></svg></button><button class="tb"><svg><use href="#zg2"/></svg></button><button class="tb"><svg><use href="#mapn"/></svg></button><button class="tb"><svg><use href="#map3"/></svg></button><button class="tb"><svg><use href="#bmn"/></svg></button><button class="tb"><svg><use href="#bm"/></svg></button><button class="tb"><svg><use href="#clock"/></svg></button><button class="tb"><svg><use href="#ref"/></svg></button><i class="grip"></i>
  <button class="tb"><svg><use href="#ident"/></svg></button><button class="tb"><svg><use href="#abac"/></svg></button><button class="tb on"><svg><use href="#gear"/></svg></button><button class="tb on"><svg><use href="#sigma"/></svg></button><button class="tb"><svg><use href="#table"/></svg></button><button class="dd"><svg><use href="#arr"/></svg></button><button class="tb"><svg><use href="#ruler"/></svg></button><button class="dd"><svg><use href="#arr"/></svg></button><button class="tb"><svg><use href="#tip"/></svg></button><button class="tb"><svg><use href="#gearg"/></svg></button><button class="dd off"><svg><use href="#arr"/></svg></button>
</div>

<div class="toolbar"><i class="grip first"></i>
  <button class="tb"><svg><use href="#dsm"/></svg></button><button class="tb"><svg><use href="#gpkg"/></svg></button><button class="tb"><svg><use href="#vn"/></svg></button><button class="tb"><svg><use href="#feather"/></svg></button><button class="tb"><svg><use href="#chip"/></svg></button><button class="tb"><svg><use href="#grid"/></svg></button><button class="tb"><svg><use href="#virt"/></svg></button><i class="grip"></i>
  <button class="tb"><svg><use href="#pens"/></svg></button><button class="tb"><svg><use href="#pen"/></svg></button><button class="tb"><svg><use href="#saveg"/></svg></button><button class="tb"><svg><use href="#digi"/></svg></button><button class="dd off"><svg><use href="#arr"/></svg></button><button class="tb on"><svg><use href="#blob"/></svg></button><button class="tb"><svg><use href="#nodes"/></svg></button><button class="dd off"><svg><use href="#arr"/></svg></button><button class="tb"><svg><use href="#tableg"/></svg></button><button class="tb"><svg><use href="#trash"/></svg></button><button class="tb"><svg><use href="#cut"/></svg></button><button class="tb"><svg><use href="#copy"/></svg></button><button class="tb"><svg><use href="#doc"/></svg></button><button class="tb"><svg><use href="#undo"/></svg></button><button class="tb flip"><svg><use href="#undo"/></svg></button><i class="gap"></i>
  <button class="tb"><svg><use href="#abc"/></svg></button><button class="tb"><svg><use href="#diag"/></svg></button><i class="sep"></i><button class="tb"><svg><use href="#abcp"/></svg></button><button class="tb"><svg><use href="#abcr"/></svg></button><i class="sep"></i><button class="tb"><svg><use href="#abcg"/></svg></button><button class="tb"><svg><use href="#abcg"/></svg></button><button class="tb"><svg><use href="#abcg"/></svg></button><button class="tb"><svg><use href="#abcg"/></svg></button><button class="tb"><svg><use href="#abcg"/></svg></button><i class="grip"></i>
  <button class="tb"><svg><use href="#osm"/></svg></button><i class="grip"></i><button class="tb"><svg><use href="#py"/></svg></button><button class="tb"><svg><use href="#gml"/></svg></button><button class="tb"><svg><use href="#photo"/></svg></button><i class="grip"></i><button class="tb"><svg><use href="#help"/></svg></button><i class="grip"></i>
</div>

<div class="toolbar"><i class="grip first"></i>
  <button class="tb"><svg><use href="#tri"/></svg></button><button class="tb"><svg><use href="#blob"/></svg></button><button class="dd off"><svg><use href="#arr"/></svg></button><button class="tb"><svg><use href="#blob"/></svg></button><button class="tb"><svg><use href="#blob"/></svg></button><button class="tb"><svg><use href="#rings"/></svg></button><button class="tb"><svg><use href="#blob"/></svg></button><button class="tb"><svg><use href="#blob2"/></svg></button><button class="tb"><svg><use href="#blob"/></svg></button><button class="tb"><svg><use href="#blob"/></svg></button><button class="tb"><svg><use href="#blob2"/></svg></button><button class="tb"><svg><use href="#patch"/></svg></button><button class="tb"><svg><use href="#patch"/></svg></button><button class="tb"><svg><use href="#nodes"/></svg></button><button class="tb"><svg><use href="#trace"/></svg></button><button class="tb"><svg><use href="#split"/></svg></button><button class="tb"><svg><use href="#split"/></svg></button><button class="tb"><svg><use href="#blob2"/></svg></button><button class="tb"><svg><use href="#lines"/></svg></button><button class="tb"><svg><use href="#curve"/></svg></button><button class="dd off"><svg><use href="#arr"/></svg></button><i class="grip"></i>
  <button class="tb"><svg><use href="#magnet"/></svg></button><button class="tb"><svg><use href="#vsnap"/></svg></button><button class="tb on"><svg><use href="#dots"/></svg></button>
  <div class="spin snap-spin"><input aria-label="Tolerancia" value="12"><svg viewBox="0 0 6 10"><path d="M3 1l2 2.500H1zM3 9l2-2.500H1z" fill="#888"/></svg></div>
  <div class="combo snap-unit"><select aria-label="Unidades"><option>px</option></select><svg><use href="#arr"/></svg></div>
  <button class="tb"><svg><use href="#topo"/></svg></button><button class="tb"><svg><use href="#green"/></svg></button><button class="tb"><svg><use href="#cross"/></svg></button><button class="tb"><svg><use href="#crv"/></svg></button><button class="dd off"><svg><use href="#arr"/></svg></button><button class="tb"><svg><use href="#trace"/></svg></button>
</div>

<div class="toolbar"><i class="grip first"></i>
  <button class="tb"><svg><use href="#curve"/></svg></button><button class="tb"><svg><use href="#circ"/></svg></button><button class="dd off"><svg><use href="#arr"/></svg></button><button class="tb"><svg><use href="#ell"/></svg></button><button class="dd off"><svg><use href="#arr"/></svg></button><button class="tb"><svg><use href="#rct"/></svg></button><button class="dd off"><svg><use href="#arr"/></svg></button><button class="tb"><svg><use href="#poly"/></svg></button><button class="dd off"><svg><use href="#arr"/></svg></button><i class="grip"></i><i class="grip"></i>
  <button class="tb"><svg><use href="#sel"/></svg></button><button class="dd"><svg><use href="#arr"/></svg></button><button class="tb"><svg><use href="#sele"/></svg></button><button class="dd"><svg><use href="#arr"/></svg></button><button class="tb"><svg><use href="#selc"/></svg></button><button class="dd"><svg><use href="#arr"/></svg></button><button class="tb"><svg><use href="#sell"/></svg></button><button class="dd"><svg><use href="#arr"/></svg></button><i class="grip"></i>
  <button class="tb"><svg><use href="#tableg"/></svg></button><button class="tb"><svg><use href="#tableg"/></svg></button><button class="dd off"><svg><use href="#arr"/></svg></button><button class="tb"><svg><use href="#eps"/></svg></button><button class="tb"><svg><use href="#mpoly"/></svg></button><button class="dd off"><svg><use href="#arr"/></svg></button><i class="grip"></i>
  <button class="tb"><svg><use href="#anno"/></svg></button><button class="dd"><svg><use href="#arr"/></svg></button><button class="tb"><svg><use href="#asel"/></svg></button><button class="tb"><svg><use href="#apoly"/></svg></button><button class="tb"><svg><use href="#aline"/></svg></button><button class="tb"><svg><use href="#astar"/></svg></button><button class="tb"><svg><use href="#atext"/></svg></button><button class="tb"><svg><use href="#acurve"/></svg></button><button class="tb"><svg><use href="#atbox"/></svg></button><button class="tb"><svg><use href="#apic"/></svg></button><i class="sep"></i><button class="tb"><svg><use href="#aform"/></svg></button><button class="dd"><svg><use href="#arr"/></svg></button><i class="grip"></i>
  <button class="tb"><svg><use href="#mlab"/></svg></button><button class="tb"><svg><use href="#targ"/></svg></button><i class="sep"></i><button class="tb"><svg><use href="#targb"/></svg></button><button class="tb"><svg><use href="#circ"/></svg></button><button class="tb"><svg><use href="#blobg"/></svg></button><button class="tb"><svg><use href="#digi"/></svg></button><i class="sep"></i><button class="tb"><svg><use href="#info"/></svg></button><button class="tb"><svg><use href="#wrench"/></svg></button><i class="grip"></i>
</div>

<main class="workspace">
  <aside class="dock left">
    <section class="panel browser">
      <div class="dock-head"><h2>Navegador</h2><svg><use href="#float"/></svg><svg><use href="#close"/></svg></div>
      <div class="dock-tools"><svg><use href="#addl"/></svg><svg><use href="#ref"/></svg><svg><use href="#filt"/></svg><svg><use href="#coll"/></svg><svg><use href="#info"/></svg></div>
      <div class="tree-box">
        <ul class="tree">
          <li class="leaf"><svg><use href="#star"/></svg>Favoritos</li>
          <li><svg><use href="#bm"/></svg>Marcadores espaciales</li>
          <li><svg><use href="#home"/></svg>Inicio</li>
          <li><svg><use href="#fold"/></svg>C:\</li>
          <li><svg><use href="#fold"/></svg>D:\ (nvme)</li>
          <li><svg><use href="#fold"/></svg>F:\ (Acer)</li>
          <li><svg><use href="#fold"/></svg>G:\ (DATA)</li>
          <li><svg><use href="#fold"/></svg>K:\ (Nuevo vol)</li>
          <li class="leaf"><svg><use href="#gpkg"/></svg>GeoPackage</li>
        </ul>
        <div class="scroll"><b class="up"></b><span class="thumb"></span><b class="down"></b></div>
      </div>
    </section>
    <section class="panel layers">
      <div class="dock-head"><h2>Capas</h2><svg><use href="#float"/></svg><svg><use href="#close"/></svg></div>
      <div class="dock-tools"><svg><use href="#brush"/></svg><svg><use href="#grp"/></svg><svg><use href="#eye"/></svg><svg><use href="#filt"/></svg><svg><use href="#epsu"/></svg><svg class="tiny"><use href="#arr"/></svg><svg><use href="#expd"/></svg><svg><use href="#coll"/></svg><svg><use href="#reml"/></svg></div>
      <ul class="layer-list">
        <li class="off"><label><input type="checkbox"><svg viewBox="0 0 12 12"><circle cx="6" cy="6" r="1.800" fill="#8fa35a" stroke="#6f8048"/></svg>UNIONPUNTPOLIGON</label></li>
        <li><label><input type="checkbox" checked><svg viewBox="0 0 12 12"><circle cx="6" cy="6" r="1.800" fill="#aaa" stroke="#777"/></svg>Settlement</label></li>
        <li class="cur"><label><input type="checkbox" checked><svg viewBox="0 0 12 12"><path d="M.5.500h11v11H.5z"/></svg><u>MASCARA</u></label></li>
        <li class="off"><label><input type="checkbox"><svg viewBox="0 0 12 12"><path d="M1 6h10" stroke="#e58a78"/></svg>UNIORECTESPOLIGONS</label></li>
        <li><label><input type="checkbox" checked><svg viewBox="0 0 12 12"><path d="M1 6h10" stroke="#b3b49a"/></svg>road2</label></li>
        <li><label><input type="checkbox" checked><svg viewBox="0 0 12 12"><path d="M.5.500h11v11H.5z" fill="#d4b43a" stroke="#a88e2c"/></svg>Regional government areas</label></li>
      </ul>
    </section>
    <section class="panel stats dlg-font">
      <div class="dock-head"><h2>Estadísticas</h2><svg><use href="#float"/></svg><svg><use href="#close"/></svg></div>
      <div class="combo with-icon"><svg class="pre"><use href="#pol"/></svg><select aria-label="Capa"><option>Regional government areas</option></select><svg><use href="#arr"/></svg></div>
      <div class="expr"><div class="combo plain"><select aria-label="Campo"><option></option></select><svg><use href="#arr"/></svg></div><button class="btn eps-btn" aria-label="Expresión">ε</button></div>
      <div class="stat-table"><table><thead><tr><th class="c1">Estadística</th><th class="c2">Valor</th></tr></thead></table></div>
      <div class="stat-foot"><label><input type="checkbox" checked>Objetos seleccionados solamente</label><svg><use href="#copy"/></svg><svg><use href="#ref"/></svg><button class="btn more" aria-label="Más">...</button></div>
    </section>
  </aside>

  <section class="canvas">
    <div class="message dlg-font">
      <svg class="tick" viewBox="0 0 18 14"><path d="M1 5l3-1 3 4 9-7L8 12z" fill="#35b233" stroke="#1e7d22"/></svg>
      <p><b>Capa exportada:</b> La capa vectorial se ha guardado correctamente en <a href="#">D:\la salle\LA SALLE 2025-2026\digitalitzacio\GIS\PRÀCTIQUES INICIALS GIS\4\SELECCIO.shp</a></p>
      <button class="msg-close" aria-label="Cerrar mensaje"><svg viewBox="0 0 12 12"><circle cx="6" cy="6" r="5.700" fill="#2b3529"/><path d="M3.600 3.600l4.800 4.800M8.400 3.600L3.600 8.400" stroke="#fff" stroke-width="2"/></svg></button>
    </div>
    <svg class="map" viewBox="224 153 880 520" preserveAspectRatio="xMinYMin slice" role="img" aria-label="Mapa">
      <path d="M418 150L407 158 402 156.500 397 158 395 155.500 388 154 380 157 375 160 374 170 375 178 377 187 379 198 383 202 384 206 387 211 395 217 399 220 403 226 406 231 412 238 417 252 423 263 428 273 431 280 436 285 439 297 443 303 445 313 450 319 455 327 463 338 467 345 468 349 470 352 478 362 482 366 487 373 490 377 492 386 494 393 494 400 490 402 489 409 491 413 492 417 490 423 493 429 492 442 491 448 492 458 497 468 498 473 504 480 506 486 508 492 506 499 506 505 509 513 508 523 512 535 511 541 512 547 518 553 520 560 517 563 520 572 523 573 524 580 526 588 532 599 537 607 539 612 545 618 560 633 577 646 582 643 588 641 589 637 592 632 594 627 597 625 603 622 605 626 612 627 615 631 616 635 618 637 616 643 618 649 624 650 630 652 643 657 652 658 667 656 677 657 682 659 690 661 697 658 696 655 698 652 703 652 707 645 712 642 717 643 722 640 729 637H771V204H792L836 195 860 190 869 191 873 197 880 205 883 212 890 207 896 204 902 198 910 192 914 191 918 189 923 193 928 188 935 184 942 182 948 183 949 181 953 181 949 178 947 173 938 171 928 169 925 171 918 168 914 169 907 168 836 183 792 192 783 189 777 188 770 189 763 192 752 189 745 185 740 186 733 187 728 185 719 184 700 183 682 183 677 179 672 175 666 168 661 164H480L475 166 470 166 465 163 452 153 449 150z" class="land"/>
      <g class="road">
        <path d="M483 178V195L487 207V230M466 191L455 208 454 225 455 237H465L467 250 468 263 473 276V285M439 290L448 289 460 285 472 284 492 291H501M482 190L466 191M497 249L512 256 533 265M575 195L588 202 603 208 610 215 622 233 632 239M553 237L575 230 600 222H613M553 240V266M587 258H610L632 256M719 185L700 207 652 252M653 252L660 256 668 257 666 264M697 327L702 332V343L688 373H720M692 380L706 395 708 407"/>
        <path d="M603 400L605 417 615 429 620 443 633 456 640 467 634 485V493L641 505 648 523 649 552M628 400L634 413 643 430 656 457M641 467L656 457 670 452 687 451 694 453 705 463 717 470M641 470H625L617 477 593 479 590 487 592 523 602 528V541L608 558M521 560L535 554 547 553 570 556 603 557 617 563 633 563 649 553M633 563L642 580V593L677 615 697 619H719M649 553L662 559 668 565V575L658 602 640 626 628 648"/>
      </g>
      <path class="road yellow" d="M494 384L508 380 515 373 521 366M632 241L624 250 612 259 605 267M640 247L653 252"/>
      <g class="border">
        <path d="M480 164L477 173 479 177 479 183 482 192 483 217 487 230 488 243 491 251H496V247L492 248 494 244 510 244 522 243 532 238 539 237 536 230 538 220 536 215 535 197 527 192 541 177 537 165M541 177H557L573 187 588 181 642 180M557 177L556 183 558 197 555 202 555 211 557 217 552 223 551 230 555 237 554 246M527 242L553 246 587 253V267M587 253L595 250 607 240 613 242 614 246 617 244 620 250 625 253 631 252 637 255 638 249 643 246 642 243 645 240V235L650 230 651 223M642 164V222L694 225V240H771M836 183V195M694 292L699 290 703 287 710 288 728 289M455 327L470 319 482 317 490 319 502 319 508 317"/>
        <path d="M493 429L510 431 532 436 545 440 546 446 555 447 561 444 567 442 564 446 570 449 572 445 578 443 574 440 571 439 573 432 578 433 579 427 583 420 583 416 590 417 597 415 603 412 610 417 620 418 617 423 619 431 631 431 643 433 650 429 661 426 667 435 677 437 684 435 696 436 697 434V442H728M559 397L553 399 551 413 550 420 547 423 549 430V439L545 440M655 399L657 404 660 408 658 415 663 420 661 426M508 491H547L552 516 555 517 567 527 571 527 569 517 573 518 577 517 579 513 582 516 598 517 600 521 606 519 613 522V515L643 513 653 510H667V514L693 514 696 512 700 516 714 518 728 517"/>
      </g>
      <path d="M494 266L695 269.500 682 399 531 396z" fill="#000"/>
      <g class="town"><circle cx="515" cy="166.500" r="2.500"/><circle cx="554.500" cy="164" r="2.500"/><circle cx="547" cy="175" r="2.500"/><circle cx="466" cy="190.500" r="2.500"/><circle cx="719" cy="184.500" r="2.500"/><circle cx="632.500" cy="239" r="2.500"/><circle cx="493" cy="386" r="2.500"/><circle cx="494" cy="400" r="2.500"/><circle cx="521" cy="560" r="2.500"/><circle cx="644.500" cy="472" r="2.500"/><circle cx="649" cy="553.500" r="2.500"/><circle cx="585" cy="292" r="2.500"/><circle cx="635" cy="335" r="2.500"/><circle cx="603" cy="383" r="2.500"/></g>
    </svg>
  </section>

  <aside class="dock right">
    <section class="panel toolbox">
      <div class="dock-head"><h2>Caja de herramientas de Procesos</h2><svg><use href="#float"/></svg><svg><use href="#close"/></svg></div>
      <div class="dock-tools"><svg><use href="#gears"/></svg><svg><use href="#py"/></svg><svg><use href="#clock"/></svg><span class="pressed"><svg><use href="#doc"/></svg></span><i class="sep"></i><svg><use href="#note"/></svg><i class="sep"></i><svg><use href="#wrench"/></svg></div>
      <div class="search"><svg><use href="#mag"/></svg><input type="search" placeholder="Buscar…" aria-label="Buscar"></div>
      <div class="tree-box">
        <ul class="tree">
          <li><svg><use href="#clock"/></svg>Usado recientemente</li>
          <li><svg><use href="#q"/></svg>Análisis de redes</li>
          <li><svg><use href="#q"/></svg>Análisis de vector</li>
          <li><svg><use href="#q"/></svg>Análisis del terreno ráster</li>
          <li><svg><use href="#q"/></svg>Análisis ráster</li>
          <li><svg><use href="#q"/></svg>Cartografía</li>
          <li><svg><use href="#q"/></svg>Cobertura vectorial</li>
          <li><svg><use href="#q"/></svg>Conversión de nube de puntos</li>
          <li><svg><use href="#q"/></svg>Creación de ráster</li>
          <li><svg><use href="#q"/></svg>Creación de vectores</li>
          <li><svg><use href="#q"/></svg>Estadísticas</li>
          <li><svg><use href="#q"/></svg>Extracción de nube de puntos</li>
          <li><svg><use href="#q"/></svg>Geometría vectorial</li>
          <li><svg><use href="#q"/></svg>Gestión de datos de nube de puntos</li>
          <li><svg><use href="#q"/></svg>GPS</li>
          <li><svg><use href="#q"/></svg>Gráficos</li>
          <li><svg><use href="#q"/></svg>Herramientas de archivo</li>
          <li><svg><use href="#q"/></svg>Herramientas de capa</li>
        </ul>
        <div class="scroll"><b class="up"></b><span class="thumb tall"></span><b class="down"></b></div>
      </div>
    </section>
    <section class="panel side">
      <div class="dock-head"><h2></h2><svg><use href="#float"/></svg><svg><use href="#close"/></svg></div>
      <div class="blank top"></div>
      <div class="blank"></div>
    </section>
  </aside>

  <svg class="pointer" viewBox="0 0 9 13"><path d="M.7.800v9.700l2.300-2 1.500 3.700 1.700-.7-1.500-3.500h3z" fill="#fff" stroke="#333" stroke-width=".8"/></svg>
</main>

<footer class="status dlg-font">
  <div class="locator"><svg><use href="#mag"/></svg><input type="search" placeholder="Escriba para localizar (Ctrl+K)" aria-label="Localizar"></div>
  <div class="status-right">
    <label class="f">Coordenada <input class="coord" value="-17,13°  11,2°"></label>
    <svg class="si" viewBox="0 0 12 12"><path d="M3 2l6 8M2 6l8-3M5 1l-1 9M2 9l8-5" stroke="#555"/><circle cx="8" cy="9" r="2" fill="none" stroke="#444"/></svg>
    <label class="f esc" for="scale">Escala</label><div class="combo plain scale"><select id="scale"><option>1:4843761</option></select><svg><use href="#arr"/></svg></div>
    <svg class="si lock" viewBox="0 0 12 12"><path d="M3.500 6V4a2.500 2.500 0 0 1 5 0v2" fill="none" stroke="#777" stroke-width="1.500"/><rect x="2" y="5.500" width="8" height="6" rx="1" fill="#666"/></svg>
    <label class="f" for="amp">Amplificador</label><div class="spin sb"><input id="amp" value="100%"><svg viewBox="0 0 6 10"><path d="M3 1l2 2.500H1zM3 9l2-2.500H1z" fill="#555"/></svg></div>
    <label class="f rot" for="rot">Rotación</label><div class="spin sb"><input id="rot" value="0,0 °"><svg viewBox="0 0 6 10"><path d="M3 1l2 2.500H1zM3 9l2-2.500H1z" fill="#555"/></svg></div>
    <label class="f rep"><input type="checkbox" checked>Representar</label>
    <button class="flat"><svg viewBox="0 0 12 12"><circle cx="6" cy="6" r="4.500" fill="#888" stroke="#666"/><path d="M1.500 6h9M6 1.500v9M2.500 3.500q3.500 2 7 0M2.500 8.500q3.500-2 7 0" fill="none" stroke="#eee" stroke-width=".7"/></svg>EPSG:4326</button>
    <button class="flat msg" aria-label="Mensajes"><svg viewBox="0 0 12 12"><path d="M6 1.500c6.500 0 6.500 7 1 7.200L5 11V8.700C-.5 8 0 1.500 6 1.500z" fill="#666"/><path d="M3.500 5.200h1M5.500 5.200h1M7.500 5.200h1" stroke="#fff"/></svg></button>
  </div>
</footer>

<footer class="taskbar">
  <button class="start" aria-label="Inicio"><svg viewBox="0 0 12 12"><path d="M.5 2l4.700-.7v4.400H.5zM5.900 1.200L11.500.4v5.300H5.900zM.5 6.300h4.700v4.400L.5 10zM5.900 6.300h5.600v5.300l-5.600-.8z"/></svg></button>
  <label class="tsearch"><svg viewBox="0 0 12 12"><circle cx="7" cy="4.700" r="3.500" fill="none" stroke="#333"/><path d="M4.500 7.300L1 11" stroke="#333"/></svg><input placeholder="Buscar"></label>
  <div class="apps">
    <button aria-label="Explorador"><svg viewBox="0 0 16 16"><path d="M1 3h6l1 2h7v9H1z" fill="#f7c948"/><path d="M1 6h14v3H1z" fill="#fde08a"/><path d="M4 14v-4h8v4h-2.500v-2h-3v2z" fill="#3d8fd1"/></svg></button>
    <button aria-label="Chrome"><svg viewBox="0 0 16 16"><circle cx="7.500" cy="7.500" r="7" fill="#f9c82f"/><path d="M1.500 4A7 7 0 0 1 14 5H7.500L5 9z" fill="#dd4336"/><path d="M1.500 4a7 7 0 0 0 5.500 10.500l3-5.500H5z" fill="#2e9e4f"/><circle cx="7.500" cy="7.500" r="3.200" fill="#fff"/><circle cx="7.500" cy="7.500" r="2.500" fill="#3f7fe8"/><circle cx="11.500" cy="11.500" r="4" fill="#6b5248"/><circle cx="11.500" cy="10.500" r="1.800" fill="#e0b79b"/></svg></button>
    <button aria-label="Pintura"><svg viewBox="0 0 16 16"><path d="M1 9c0-5 5-7 9-6s5 5 2 6-3 0-3 2-1 3-3 3-5-2-5-5z" fill="#dfe7ec" stroke="#9ab"/><circle cx="4" cy="9" r="1.200" fill="#d34"/><circle cx="5.500" cy="6" r="1.200" fill="#3a9"/><circle cx="9" cy="5" r="1.200" fill="#48c"/><path d="M7 13l7-12" stroke="#c9903e" stroke-width="1.600"/></svg></button>
    <button class="active" aria-label="QGIS"><svg viewBox="0 0 12 12"><use href="#q"/></svg></button>
    <button aria-label="Writer"><svg viewBox="0 0 16 16"><path d="M2 0h8l4 4v12H2z" fill="#1c85d6"/><path d="M10 0v4h4z" fill="#8ecbf5"/><path d="M4 7h3M9 7h3M4 9.500h8M4 12h5" stroke="#fff"/></svg></button>
    <button aria-label="OBS"><svg viewBox="0 0 16 16"><circle cx="8" cy="8" r="7" fill="#222"/><path d="M8 8C5 7 6 4 8 3.500M8 8c3-2 5 0 4 2.500M8 8c0 3-2 4-4.500 3" fill="none" stroke="#999"/></svg></button>
  </div>
  <div class="tray">
    <svg class="w" viewBox="0 0 16 16"><circle cx="7" cy="7" r="5.500" fill="#f09a35"/><path d="M6 15a3 3 0 0 1 0-5 4 4 0 0 1 7 0 2.500 2.500 0 0 1 1 5z" fill="#dfe9f4"/><circle cx="12" cy="4" r="4" fill="#c42b1c"/><path d="M11 3q1-1.500 2 0L11 6h2.200" fill="none" stroke="#fff" stroke-width=".8"/></svg>
    <span class="weather">12°C&nbsp; Parc. soleado</span>
    <svg viewBox="0 0 12 12"><path d="M2 8l4-4 4 4" fill="none" stroke="#333"/></svg>
    <svg viewBox="0 0 12 12"><rect x="4" width="4" height="8" rx="2" fill="#111"/><path d="M2.500 6q0 3.500 3.500 3.500T9.500 6M6 9v3M3.500 11.500h5" fill="none" stroke="#111"/></svg>
    <svg viewBox="0 0 12 12"><path d="M1 4.500h2L5 2.500v7L3 7.500H1z" fill="none" stroke="#333"/><path d="M7 4.500q1 1.500 0 3M8.800 3q2 3 0 6M10.300 2q2.500 4 0 8" fill="none" stroke="#333" stroke-width=".8"/></svg>
    <svg viewBox="0 0 12 12"><path d="M4 2.500h7.500v6H4M6 11h4M8 8.500V11M.8 1.500h3V4h-3zM2.300 4v7" fill="none" stroke="#333"/></svg>
    <svg viewBox="0 0 12 12"><path d="M2.500 9.500A2.500 2.500 0 0 1 3 5a3.500 3.500 0 0 1 6.500-.3A2.500 2.500 0 0 1 9.500 9.500z" fill="#1384dd"/></svg>
    <svg viewBox="0 0 12 12"><path d="M2 8.500A2.500 2.500 0 0 1 3 4a3.500 3.500 0 0 1 6.500 1" fill="none" stroke="#555"/><circle cx="8" cy="8" r="3.500" fill="#1674c8"/><path d="M8 7.300v3M8 5.500v.9" stroke="#fff"/></svg>
    <span class="esp">ESP</span>
    <time>13:00<br>19/02/2026</time>
    <svg viewBox="0 0 12 12"><path d="M.5 1h11v8H5l-2 2.500V9H.5z" fill="#111"/><path d="M2.500 3.500h7M2.500 5h7M2.500 6.500h4" stroke="#ddd" stroke-width=".7"/></svg>
  </div>
</footer>

<div class="dialog dlg-font" role="dialog" aria-label="Superposición vectorial - Cortar">
  <div class="dlg-title"><svg><use href="#q"/></svg><span>Superposición vectorial - Cortar</span><button aria-label="Cerrar"><svg viewBox="0 0 8 8"><path d="M.7.700l6.600 6.600M7.300.7L.7 7.300" stroke="#333"/></svg></button></div>
  <div class="dlg-body">
    <div class="params">
      <div class="tabs"><button class="tab sel">Parámetros</button><button class="tab">Registro</button></div>
      <form class="page">
        <label for="in1">Capa de entrada</label>
        <div class="line"><div class="combo with-icon"><svg class="pre"><use href="#pol"/></svg><select id="in1"><option>MASCARA [EPSG:4326]</option></select><svg><use href="#arr"/></svg></div><svg class="act"><use href="#refg"/></svg><svg class="act"><use href="#wrench"/></svg><button type="button" class="btn more" aria-label="Más">...</button></div>
        <label class="chk dis"><input type="checkbox" disabled>Objetos seleccionados solamente</label>
        <label for="in2">Capa de superposición</label>
        <div class="line"><div class="combo with-icon"><svg class="pre"><use href="#pol"/></svg><select id="in2"><option>MASCARA [EPSG:4326]</option></select><svg><use href="#arr"/></svg></div><svg class="act"><use href="#refg"/></svg><svg class="act"><use href="#wrench"/></svg><button type="button" class="btn more" aria-label="Más">...</button></div>
        <label class="chk dis"><input type="checkbox" disabled>Objetos seleccionados solamente</label>
        <label for="out">Cortado</label>
        <div class="line"><input id="out" class="text" placeholder="[Crear capa temporal]"><button type="button" class="btn more" aria-label="Más">...</button></div>
        <label class="chk"><input type="checkbox" checked>Abrir el archivo de salida después de ejecutar el algoritmo</label>
      </form>
    </div>
    <div class="fold"><svg viewBox="0 0 4 6"><path d="M3.500.5v5L.5 3z" fill="#333"/></svg></div>
    <article class="helpbox">
      <h3>Cortar</h3>
      <p>Este algoritmo corta una capa vectorial utilizando<br>los objetos espaciales de una capa poligonal<br>adicional. Sólo las partes de los objetos de la capa<br>de entrada que caen dentro de los polígonos de la<br>capa de superposición se añadirán a la capa<br>resultante.</p>
      <p>Los atributos de los objetos no se modifican,<br>aunque la operación de corte modificará<br>propiedades como área o longitud de los objetos.<br>Si esas propiedades están guardadas como<br>atributos tendrán que actualizarse manualmente.</p>
    </article>
  </div>
  <div class="dlg-row"><div class="progress" role="progressbar" aria-valuenow="0">0%</div><button class="btn std" disabled>Cancelar</button></div>
  <div class="dlg-row last"><button class="btn adv">Avanzado<svg><use href="#arr"/></svg></button><button class="btn batch">Ejecutar como proceso por lotes…</button><span class="grow"></span><button class="btn std run">Ejecutar</button><button class="btn std">Cerrar</button><button class="btn std">Ayuda</button></div>
</div>
</body>
</html>
```
FILE: styles.css
```css
* { box-sizing: border-box; }
html, body { height: 100%; }
body {
  margin: 0;
  display: flex;
  flex-direction: column;
  overflow: hidden;
  background: #f0f0f0;
  color: #222;
  font: 8px/12px Roboto, "Open Sans", sans-serif;
  position: relative;
}
button, input, select { font: inherit; color: inherit; margin: 0; padding: 0; border: 0; background: none; min-width: 0; }
input::placeholder { color: #888; opacity: 1; }
input[type="search"] { appearance: none; outline: 0; }
h2, h3, p, ul { margin: 0; padding: 0; }
ul { list-style: none; }
svg { flex: none; display: block; }
.defs { display: none; }
.dlg-font { font-family: "DejaVu Sans Condensed", "DejaVu Sans", sans-serif; font-size: 7px; }

/* title and menu */
.titlebar { display: flex; align-items: center; gap: 3px; height: 15px; padding-left: 1px; background: #fff; color: #777; flex: none; }
.app-logo { width: 12px; height: 12px; }
.win-btns { margin-left: auto; display: flex; gap: 22px; padding-right: 13px; }
.win-btns button, .win-btns svg { width: 8px; height: 8px; display: block; }
.menubar { display: flex; gap: 9px; height: 13px; padding-left: 7px; flex: none; }
.menubar a { color: #8a8a8a; text-decoration: none; line-height: 13px; }

/* toolbars */
.toolbar { display: flex; align-items: center; height: 26px; flex: none; background: linear-gradient(#fafafa, #eee); border-top: 1px solid #fff; border-bottom: 1px solid #c6c6c6; }
.tb { width: 22px; height: 22px; flex: none; display: grid; place-items: center; border-radius: 2px; }
.tb svg { width: 17px; height: 17px; }
.tb.on { background: #d9d9d9; border: 1px solid #b5b5b5; }
.tb.flip svg { transform: scaleX(-1); }
.dd { width: 8px; height: 22px; display: grid; place-items: center; flex: none; }
.dd svg, .combo > svg:last-child { width: 6px; height: 4px; }
.dd.off { opacity: .6; }
.grip { width: 10px; height: 16px; flex: none; background: radial-gradient(circle, #c9c9c9 1px, transparent 1px) 4px 0 / 3px 3px repeat-y; }
.grip.first { width: 8px; }
.gap { width: 10px; flex: none; }
.sep { width: 5px; height: 18px; flex: none; background: linear-gradient(#d2d2d2, #d2d2d2) 2px 0 / 1px 100% no-repeat; }

/* form pieces */
.combo { position: relative; display: flex; height: 15px; flex: none; }
.combo select { appearance: none; width: 100%; height: 100%; padding-left: 4px; border: 1px solid #bcbcbc; border-radius: 2px; background: linear-gradient(#fff, #f1f1f1); }
.combo.plain select { background: #fff; }
.combo > svg:last-child { position: absolute; right: 4px; top: 6px; }
.combo.with-icon select { padding-left: 15px; }
.combo .pre { position: absolute; left: 4px; top: 3px; width: 11px; height: 8px; }
.spin { position: relative; display: flex; height: 15px; }
.spin input { width: 100%; height: 100%; padding-left: 4px; background: #fff; border: 1px solid #bcbcbc; border-radius: 2px; }
.spin svg { position: absolute; right: 2px; top: 2px; width: 6px; height: 11px; }
.snap-spin { width: 55px; margin: 0 2px 0 1px; color: #777; }
.snap-spin input { background: #f4f4f4; }
.snap-unit { width: 68px; margin-right: 2px; color: #777; }
.btn { height: 15px; border: 1px solid #bdbdbd; border-radius: 2px; background: linear-gradient(#fff, #f3f3f3); flex: none; line-height: 12px; }
.btn:disabled { color: #999; border-color: #d0d0d0; }
.more { width: 15px; text-align: center; }
input[type="checkbox"] { appearance: none; width: 9px; height: 9px; flex: none; background: #fff; border: 1px solid #c2c2c2; position: relative; }
input[type="checkbox"]:checked::before { content: ""; position: absolute; left: 2px; top: 0; width: 3px; height: 6px; border: solid #111; border-width: 0 1px 1px 0; box-shadow: 1px 0 0 #111; transform: rotate(40deg); }

/* workspace */
.workspace { flex: 1; min-height: 0; display: flex; gap: 4px; }
.dock { display: flex; flex-direction: column; flex: none; min-height: 0; }
.left { width: 219px; }
.right { width: 171px; }
.dock-head { display: flex; align-items: center; gap: 1px; height: 14px; padding: 0 1px 0 3px; flex: none; }
.dock-head h2 { flex: 1; font: 8px/14px Roboto, sans-serif; white-space: nowrap; }
.dock-head svg { width: 8px; height: 8px; }
.dock-tools { display: flex; align-items: center; gap: 4px; height: 20px; padding-left: 5px; flex: none; }
.dock-tools svg { width: 12px; height: 12px; }
.dock-tools .tiny { width: 6px; height: 4px; }
.dock-tools .sep { margin: 0 -2px; }
.pressed { padding: 1px; background: #ddd; border: 1px solid #bbb; border-radius: 2px; }
.panel { display: flex; flex-direction: column; min-height: 0; flex: none; }
.tree-box { display: flex; flex: 1; min-height: 0; overflow: hidden; background: #fff; border: 1px solid #c0c0c0; }
.tree { flex: 1; overflow: hidden; }
.tree li { display: flex; align-items: center; gap: 4px; height: 12px; padding-left: 4px; white-space: nowrap; }
.tree li::before { content: ""; border: 2px solid transparent; border-left: 3px solid #444; margin-right: 1px; }
.tree li.leaf::before { border-color: transparent; }
.tree svg { width: 10px; height: 10px; }
.scroll { width: 9px; flex: none; display: flex; flex-direction: column; background: #dcdcdc; border-left: 1px solid #c8c8c8; }
.scroll b { height: 9px; background: #f4f4f4; display: grid; place-items: center; }
.scroll b::before { content: ""; border: 2px solid transparent; border-bottom: 3px solid #555; border-top: 0; }
.scroll .down { margin-top: auto; }
.scroll .down::before { border: 2px solid transparent; border-top: 3px solid #555; border-bottom: 0; }
.thumb { height: 29px; background: #f8f8f8; border: solid #c8c8c8; border-width: 1px 0; }
.thumb.tall { height: 105px; }
.browser { height: 139px; padding-right: 1px; }
.layers { height: 238px; padding: 4px 1px 0 0; }
.layer-list { flex: 1; background: #fff; border: 1px solid #c0c0c0; }
.layer-list label { display: flex; align-items: center; height: 12px; padding-left: 15px; font-weight: 700; white-space: nowrap; }
.layer-list svg { width: 11px; height: 11px; margin: 0 4px; }
.layer-list .off { color: #888; font-style: italic; }
.layer-list .off label { font-weight: 500; }
.layer-list .cur { background: #efefef; }
.stats { flex: 1; padding: 3px 1px 0 0; }
.expr { display: flex; gap: 5px; margin-top: 2px; }
.expr .combo { flex: 1; }
.expr .combo::after { content: ""; position: absolute; right: 13px; top: 1px; bottom: 1px; border-left: 1px solid #ccc; }
.eps-btn { width: 16px; font: 12px/12px "Liberation Serif", serif; }
.stat-table { flex: 1; margin-top: 3px; background: linear-gradient(#f2f2f2, #f2f2f2) 0 0 / 100% 12px no-repeat #fff; border: 1px solid #c0c0c0; }
.stat-table table { border-collapse: collapse; table-layout: fixed; width: 91px; }
.stat-table th { height: 12px; padding: 0; font-weight: 400; background: linear-gradient(#fff, #f2f2f2); border-bottom: 1px solid #c8c8c8; border-right: 1px solid #c8c8c8; }
.stat-table .c1 { width: 67px; }
.stat-foot { display: flex; align-items: center; gap: 6px; height: 17px; flex: none; padding-top: 2px; }
.stat-foot label { display: flex; align-items: center; gap: 3px; flex: 1; }
.stat-foot svg { width: 12px; height: 12px; }

/* canvas */
.canvas { flex: 1; min-width: 0; display: flex; flex-direction: column; background: #fff; border: 1px solid #c3c3c3; }
.message { display: flex; align-items: center; height: 20px; flex: none; padding: 0 14px 0 5px; background: #dcf0d6; border-bottom: 1px solid #a8bfa2; color: #111; white-space: nowrap; }
.tick { width: 18px; height: 14px; margin-right: 5px; }
.message p { flex: 1; }
.message a { color: #3f8f3f; }
.msg-close svg { width: 12px; height: 12px; }
.map { flex: 1; min-height: 0; width: 100%; }
.land { fill: #d4b43a; stroke: #6a5d28; stroke-width: 1; }
.road { fill: none; stroke: #a9b052; stroke-width: 1; }
.road.yellow { stroke: #f2df2e; }
.border { fill: none; stroke: #5c4f14; stroke-width: 1; }
.town { fill: #bfbba6; stroke: #5d5a4c; stroke-width: 1; }
.pointer { position: absolute; left: 409px; top: 65px; width: 9px; height: 13px; }

/* right dock */
.toolbox { height: 260px; padding: 0 0 0 1px; }
.toolbox .dock-tools { gap: 5px; }
.search { display: flex; align-items: center; gap: 4px; height: 14px; padding-left: 5px; background: #fff; border: 1px solid #c0c0c0; flex: none; }
.search svg, .locator svg { width: 9px; height: 9px; }
.search input, .locator input { flex: 1; }
.side { flex: 1; padding: 3px 0 0 1px; }
.blank { flex: 1; background: #fff; border: 1px solid #c3c3c3; }
.blank.top { margin-bottom: 2px; }

/* status bar */
.status { display: flex; align-items: center; justify-content: space-between; height: 20px; padding: 0 4px 0 3px; flex: none; white-space: nowrap; }
.locator { display: flex; align-items: center; gap: 5px; width: 168px; height: 15px; padding-left: 5px; background: #fff; border: 1px solid #bcbcbc; border-radius: 2px; }
.status-right { display: flex; align-items: center; gap: 3px; }
.f { display: flex; align-items: center; gap: 2px; }
.coord { width: 60px; height: 15px; border: 1px solid #bcbcbc; border-radius: 2px; background: #fff; text-align: center; }
.si { width: 12px; height: 12px; margin: 0 2px; }
.si.lock { margin: 0; }
.scale { width: 53px; }
.sb { width: 55px; }
.rot { margin: 0 3px; }
.rep { margin: 0 8px 0 6px; gap: 3px; }
.flat { display: flex; align-items: center; }
.flat svg { width: 11px; height: 11px; }
.msg { margin-left: 11px; }

/* taskbar */
.taskbar { display: flex; align-items: stretch; height: 26px; flex: none; background: #cde3e7; }
.start { width: 33px; display: grid; place-items: center; background: #c2dce1; }
.start svg { width: 12px; height: 12px; }
.tsearch { width: 190px; display: flex; align-items: center; gap: 7px; padding-left: 7px; background: #fff; font-size: 10px; }
.tsearch svg { width: 12px; height: 12px; }
.tsearch input { flex: 1; outline: 0; }
.tsearch input::placeholder { color: #444; }
.apps { display: flex; gap: 3px; padding-left: 4px; }
.apps button { width: 30px; display: grid; place-items: center; border-bottom: 2px solid #1d74b8; }
.apps button.active { background: #eef6f7; }
.apps svg { width: 16px; height: 16px; }
.tray { margin-left: auto; display: flex; align-items: center; gap: 4px; padding-right: 16px; color: #222; }
.tray svg { width: 12px; height: 12px; }
.tray .w { width: 16px; height: 16px; }
.weather { font-size: 9px; margin-right: 11px; }
.esp { margin-left: 3px; }
time { text-align: center; margin: 0 8px 0 6px; }

/* dialog */
.dialog { position: absolute; top: 268px; right: 91px; width: 460px; background: #f0f0f0; border: 1px solid #7c7c7c; box-shadow: 1px 3px 8px rgba(0, 0, 0, .35); line-height: 11px; }
.dlg-title { display: flex; align-items: center; gap: 4px; height: 20px; padding: 0 6px 0 4px; background: #fff; font: 8px/12px Roboto, sans-serif; }
.dlg-title > svg { width: 11px; height: 11px; }
.dlg-title span { flex: 1; }
.dlg-title button svg { width: 8px; height: 8px; }
.dlg-body { display: flex; height: 285px; margin: 7px 7px 0; }
.params { flex: 1; display: flex; flex-direction: column; }
.tabs { display: flex; align-items: flex-end; height: 16px; padding: 0; }
.tab { height: 15px; padding: 0 7px; border: 1px solid #c4c4c4; border-bottom: 0; background: #e9e9e9; }
.tab.sel { height: 16px; background: #fff; }
.page { flex: 1; display: flex; flex-direction: column; padding: 6px 3px; border: 1px solid #c4c4c4; background: linear-gradient(#fbfbfb, #f0f0f0 14px); }
.line { display: flex; align-items: center; gap: 7px; height: 15px; margin: 3px 0 7px; }
.line .combo, .line .text { flex: 1; }
.line .text { height: 14px; padding-left: 2px; border: 1px solid #bcbcbc; border-radius: 2px; background: #fff; }
.line .act { width: 17px; height: 17px; }
.line .text + .more { margin-left: -2px; }
.chk { display: flex; align-items: center; gap: 3px; height: 10px; margin-bottom: 5px; white-space: nowrap; }
.chk.dis { color: #999; }
.chk.dis input { background: #f4f4f4; border-color: #ccc; }
.fold { width: 10px; padding: 0 3px; }
.fold svg { width: 4px; height: 6px; }
.helpbox { width: 171px; padding: 4px 3px; background: #fff; border: 1px solid #c4c4c4; color: #666; white-space: nowrap; line-height: 9px; }
.helpbox h3 { margin: 0 0 8px; font-size: 12px; line-height: 13px; color: #444; }
.helpbox p { margin-bottom: 6px; }
.dlg-row { display: flex; align-items: center; gap: 4px; margin: 17px 7px 0; }
.dlg-row.last { margin-top: 3px; margin-bottom: 6px; }
.progress { flex: 1; height: 15px; text-align: center; line-height: 13px; background: #fff; border: 1px solid #bcbcbc; }
.std { width: 54px; }
.run { background: #f1f8fd; border-color: #7fb2da; }
.adv { width: 53px; display: flex; align-items: center; justify-content: space-around; }
.adv svg { width: 4px; height: 3px; }
.batch { width: 116px; white-space: nowrap; }
.grow { flex: 1; }
```
